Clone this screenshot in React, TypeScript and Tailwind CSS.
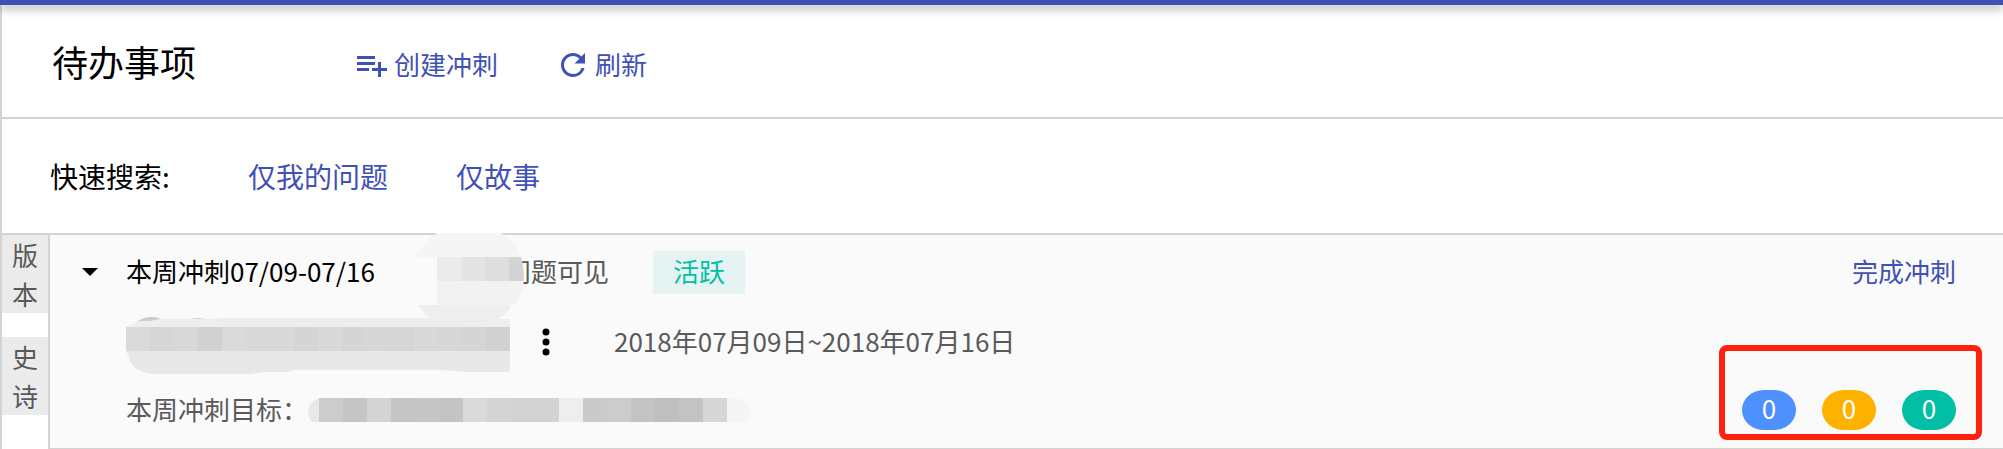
import type { ReactNode } from 'react'
import { MdRefresh } from 'react-icons/md'

type Cell = { x: number; fill: string }

const nameCells: Cell[] = [
  { x: 0, fill: '#dadada' },
  { x: 24, fill: '#d6d6d6' },
  { x: 48, fill: '#d8d8d8' },
  { x: 72, fill: '#d1d1d1' },
  { x: 96, fill: '#dadada' },
  { x: 120, fill: '#d8d8d8' },
  { x: 144, fill: '#d9d9d9' },
  { x: 168, fill: '#d5d5d5' },
  { x: 192, fill: '#d9d9d9' },
  { x: 216, fill: '#d5d5d5' },
  { x: 240, fill: '#d7d7d7' },
  { x: 264, fill: '#d6d6d6' },
  { x: 288, fill: '#d9d9d9' },
  { x: 312, fill: '#d7d7d7' },
  { x: 336, fill: '#d5d5d5' },
  { x: 360, fill: '#d1d1d1' },
]

const goalCells: Cell[] = [
  { x: 11, fill: '#cccccc' },
  { x: 35, fill: '#c5c5c5' },
  { x: 59, fill: '#d4d4d4' },
  { x: 83, fill: '#c5c5c5' },
  { x: 107, fill: '#c6c6c6' },
  { x: 131, fill: '#c4c4c4' },
  { x: 155, fill: '#dadada' },
  { x: 179, fill: '#d4d4d4' },
  { x: 203, fill: '#d2d2d2' },
  { x: 227, fill: '#d3d3d3' },
  { x: 251, fill: '#eeeeee' },
  { x: 275, fill: '#cacaca' },
  { x: 299, fill: '#cccccc' },
  { x: 323, fill: '#c4c4c4' },
  { x: 347, fill: '#bfbfbf' },
  { x: 371, fill: '#c3c3c3' },
  { x: 395, fill: '#d6d6d6' },
]

const counts = [
  { status: '待处理', value: 0, color: 'bg-[#4d90fe]' },
  { status: '处理中', value: 0, color: 'bg-[#ffb100]' },
  { status: '已完成', value: 0, color: 'bg-[#00bfa5]' },
]

function LinkButton({ icon, children }: { icon?: ReactNode; children: ReactNode }) {
  return (
    <button type="button" className="flex cursor-pointer items-center gap-1 text-[#3f51b5]">
      {icon}
      <span className="pb-1">{children}</span>
    </button>
  )
}

function PlaylistAddIcon() {
  return (
    <svg viewBox="0 0 24 24" className="size-9" fill="currentColor" aria-hidden="true">
      <path d="M14 10H2v2h12v-2zm0-4H2v2h12V6zm4 8v-4h-2v4h-4v2h4v4h2v-4h4v-2h-4zM2 16h8v-2H2v2z" />
    </svg>
  )
}

function SideTab({ label }: { label: string }) {
  return (
    <button type="button" className="w-full cursor-pointer bg-[#ebebeb] px-[10px] leading-[39px] break-all text-[#595959]">
      {label}
    </button>
  )
}

function NameMask() {
  return (
    <svg width="384" height="56" className="shrink-0 overflow-visible" aria-hidden="true">
      <path d="M8 10Q16 3 25 3Q34 3 38 7ZM60 7Q72 1 84 7Z" fill="#cccccc" />
      <path d="M0 13L12 7H24L34 5H84L96 4H310L330 3L352 5H384V13Z" fill="#eeeeee" />
      <path d="M0 37H384V57Q384 58 380 58H340Q325 56 310 56H168Q160 59 150 58Q140 57 125 60H27Q4 57 3 42Z" fill="#e8e8e8" />
      {nameCells.map((cell) => (
        <rect key={cell.x} x={cell.x} y="13" width="24" height="24" fill={cell.fill} />
      ))}
    </svg>
  )
}

function VisibilityMask() {
  return (
    <svg width="109" height="90" className="absolute top-[-18px] left-0" aria-hidden="true">
      <path d="M0 24Q9 8 22 0H86Q100 8 106 24Z" fill="#f5f5f5" />
      <path d="M3 72H95V76Q88 84 78 88H20Q9 82 3 72Z" fill="#eeeeee" />
      <path d="M22 48H109Q107 62 99 72H22Z" fill="#f2f2f2" />
      <path d="M22 24H46V48H22Z" fill="#ebebeb" />
      <path d="M46 24H70V48H46Z" fill="#e4e4e4" />
      <path d="M70 24H94V48H70Z" fill="#dedede" />
      <path d="M94 24H106Q109 34 109 48H94Z" fill="#d3d3d3" />
    </svg>
  )
}

function GoalMask() {
  return (
    <svg width="442" height="24" className="shrink-0" aria-hidden="true">
      <path d="M11 0Q0 4 0 14Q0 20 4 24H11Z" fill="#e8e8e8" />
      <path d="M419 0H430Q441 4 442 14Q442 20 438 24H419Z" fill="#f5f5f5" />
      {goalCells.map((cell) => (
        <rect key={cell.x} x={cell.x} y="0" width="24" height="24" fill={cell.fill} />
      ))}
    </svg>
  )
}

function SprintPanel() {
  return (
    <section className="flex min-w-0 flex-1 flex-col gap-5 border-b border-l-2 border-[#d3d3d3] bg-[#fafafa] pt-[15px] pr-[47px] pb-[18px] pl-8 text-[#595959]">
      <div className="flex h-11 items-center">
        <button type="button" aria-label="折叠" className="w-11 cursor-pointer">
          <svg width="16" height="8" fill="#000" aria-hidden="true">
            <path d="M0 0H16L8 8Z" />
          </svg>
        </button>
        <h2 className="w-[289px] pb-1 text-black">本周冲刺07/09-07/16</h2>
        <div className="relative w-[238px] pb-1 pl-[90px]">
          问题可见
          <VisibilityMask />
        </div>
        <span className="bg-[#e5f4f3] px-5 pb-1 text-[#00bfa5]">活跃</span>
        <div className="ml-auto">
          <LinkButton>完成冲刺</LinkButton>
        </div>
      </div>

      <div className="flex h-14 items-center pl-11">
        <NameMask />
        <button type="button" aria-label="更多" className="mx-8 cursor-pointer">
          <svg width="8" height="28" fill="#000" aria-hidden="true">
            <circle cx="4" cy="4" r="3.5" />
            <circle cx="4" cy="14" r="3.5" />
            <circle cx="4" cy="24" r="3.5" />
          </svg>
        </button>
        <p className="pb-1 pl-8">2018年07月09日~2018年07月16日</p>
      </div>

      <div className="flex h-10 items-center pl-11">
        <p className="pb-1">本周冲刺目标：</p>
        <GoalMask />
        <div className="relative ml-auto flex gap-[26px] leading-9 text-white">
          <div className="absolute -top-[45px] -right-[26px] -bottom-[10px] -left-[23px] rounded-lg border-6 border-[#ff2010]" />
          {counts.map((count) => (
            <span
              key={count.status}
              className={`w-[54px] pb-1 text-center [border-radius:22px/20px] ${count.color}`}
            >
              {count.value}
            </span>
          ))}
        </div>
      </div>
    </section>
  )
}

export default function App() {
  return (
    <div className="bg-white font-['Noto_Sans_CJK_SC',sans-serif] text-[26px] leading-[39px] font-normal">
      <div className="relative h-[5px] bg-[#3f51b5] shadow-[0_4px_8px_rgba(0,0,0,0.35)]" />
      <div className="border-l-2 border-[#d3d3d3]">
        <header className="flex h-[114px] items-center border-b-2 border-[#d3d3d3] pl-[50px]">
          <h1 className="w-[302px] text-4xl">待办事项</h1>
          <div className="mt-2 flex gap-[57px]">
            <LinkButton icon={<PlaylistAddIcon />}>创建冲刺</LinkButton>
            <LinkButton icon={<MdRefresh className="size-9" />}>刷新</LinkButton>
          </div>
        </header>

        <nav className="flex h-[116px] items-center border-b-2 border-[#d3d3d3] pt-1 pl-12 text-[28px]">
          <span className="w-[198px] pb-1">快速搜索:</span>
          <div className="flex gap-[68px]">
            <LinkButton>仅我的问题</LinkButton>
            <LinkButton>仅故事</LinkButton>
          </div>
        </nav>

        <main className="flex">
          <aside className="flex w-[46px] shrink-0 flex-col gap-6">
            <SideTab label="版本" />
            <SideTab label="史诗" />
          </aside>
          <SprintPanel />
        </main>
      </div>
    </div>
  )
}
